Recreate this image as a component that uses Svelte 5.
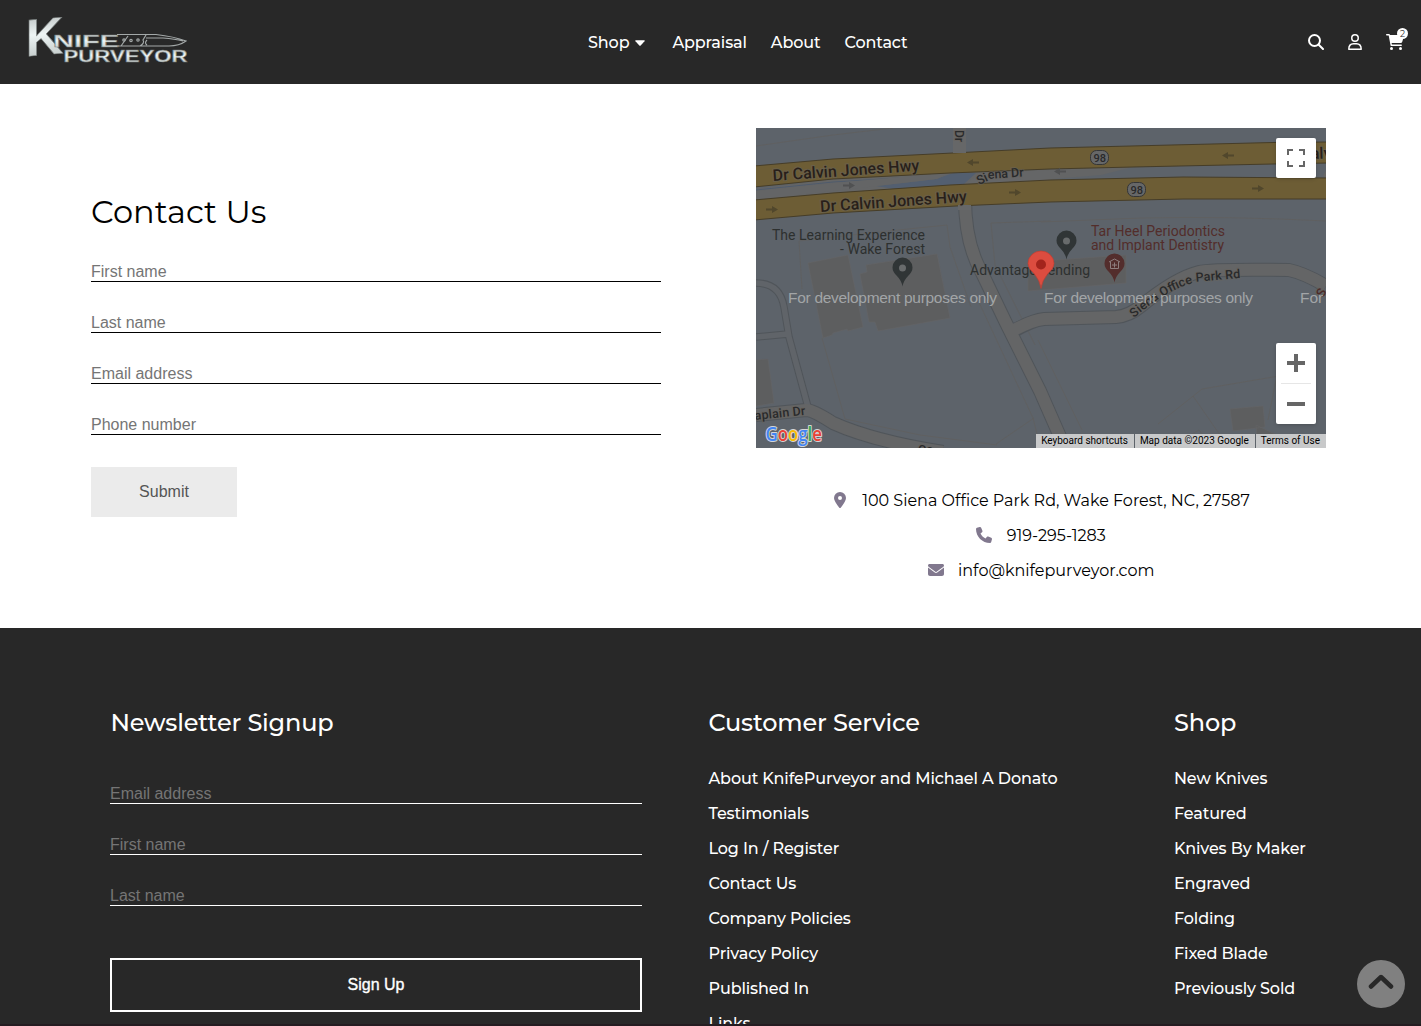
<script>
  const nav = ['Shop', 'Appraisal', 'About', 'Contact'];
  const contactFields = ['First name', 'Last name', 'Email address', 'Phone number'];
  const signupFields = ['Email address', 'First name', 'Last name'];
  const service = [
    'About KnifePurveyor and Michael A Donato',
    'Testimonials',
    'Log In / Register',
    'Contact Us',
    'Company Policies',
    'Privacy Policy',
    'Published In',
    'Links'
  ];
  const shop = [
    'New Knives',
    'Featured',
    'Knives By Maker',
    'Engraved',
    'Folding',
    'Fixed Blade',
    'Previously Sold'
  ];
</script>

<div class="page">
  <header>
    <svg class="logo" width="164" height="54" viewBox="26 13 164 54">
      <defs>
        <linearGradient id="steel" x1="0" y1="0" x2="0" y2="1">
          <stop offset="0" stop-color="#aeb3b3" />
          <stop offset=".45" stop-color="#eef5f5" />
          <stop offset="1" stop-color="#b4bcbb" />
        </linearGradient>
      </defs>
      <g class="mark">
        <text transform="translate(25.500 56.500) skewY(-5) scale(1 1.220)" font-size="43" textLength="38" lengthAdjust="spacingAndGlyphs">K</text>
        <text x="53" y="47" font-size="17" textLength="66" lengthAdjust="spacingAndGlyphs">NIFE</text>
        <text x="63.500" y="61.500" font-size="16" textLength="124" lengthAdjust="spacingAndGlyphs">PURVEYOR</text>
      </g>
      <g fill="none" stroke="#a3a8a8" stroke-width="1.200">
        <path d="M117 34.500h39q18 2 30 6.500q-7 5-17 5h-51M121 46l7-10M140 46q5-3 3-6l3-5M146 38h17q12 1 20 3M147 45q-3-2 0-5" />
        <circle cx="124" cy="40" r="1.200" /><circle cx="131" cy="40.500" r="1.200" /><circle cx="138" cy="40" r="1.200" />
      </g>
    </svg>
    <nav>
      {#each nav as label, i}
        <a href="#top">{label}{#if i === 0}<svg class="caret" width="10" height="6" viewBox="0 0 10 6"><path d="M1 .2h8q1.300 0 .5 1L5.700 5.500q-.7.700-1.400 0L.5 1.200Q-.3.200 1 .2z" fill="#fff" /></svg>{/if}</a>
      {/each}
    </nav>
    <div class="tools">
      <svg width="16" height="16" viewBox="0 0 16 16" fill="none" stroke="#fff" stroke-width="2" stroke-linecap="round"><circle cx="6.500" cy="6.500" r="5.500" /><path d="M10.700 10.700 15 15" /></svg>
      <svg width="14" height="16" viewBox="0 0 14 16" fill="none" stroke="#fff" stroke-width="1.500"><circle cx="7" cy="4" r="3.250" /><path d="M.8 15.200Q.8 9.750 5.500 9.750h3q4.700 0 4.700 5.450z" stroke-linejoin="round" /></svg>
      <span class="cart">
        <svg width="18" height="16" viewBox="0 0 18 16"><path d="M0 .750Q0 0 .750 0H3q.8 0 1 1h13.200q1 0 .750 1l-1.600 5.500Q16 9 14.500 9H5.600l.3 1.500H15.200q.75 0 .75.750t-.75.750H5.300q-.6 0-.75-.600L2.700 1.500H.750Q0 1.500 0 .750z" fill="#fff" /><circle cx="5.500" cy="14.500" r="1.500" fill="#fff" /><circle cx="14.500" cy="14.500" r="1.500" fill="#fff" /></svg>
        <b>2</b>
      </span>
    </div>
  </header>

  <main>
    <form class="contact">
      <h1>Contact Us</h1>
      {#each contactFields as f}<input placeholder={f} />{/each}
      <button type="button">Submit</button>
    </form>

    <section class="visit">
      <div class="map">
        <svg width="570" height="320" viewBox="0 0 570 320">
          <rect width="570" height="320" fill="#5d636a" />
          <g fill="none" stroke="#606060" stroke-width=".9">
            <path d="M0 18 77 7l60-7M46 161l-3-48 70-8 78-8 3 22 21 60M235 95l60-2M235 95l4 42 40 80M66 210l23 81 75 16 77 10M220 168l57 122 5 20M282 212l44 90M402 296l44-35 83-14M437 268l36 52M520 252l-8 40M285 94l100-4q90-2 185 3" />
            <path d="M240 316l38-26M458 320l-15-18-30 18" />
          </g>
          <g fill="#5d5e5f" stroke="#646566" stroke-width=".6">
            <path d="M52 135 92 127 107 199 92 203 91 201 77 205 76 207 67 210z" />
            <path d="M104 146 111 144 110 137 181 126 194 190 122 203 119 194 113 194z" />
            <path d="M0 232 12 231 18 275 0 278zM272 134 370 127v28l-98 8z" />
            <path d="M474 281 507 278 509 299 477 303zM500 297l25 12-3 11h-20z" />
          </g>

          <g fill="none" stroke-linejoin="round">
            <g stroke="#50555a">
              <path d="M0 155q24 0 28 24l5 30 19 70M0 209l32-3" stroke-width="7.500" />
              <path d="M0 287 50 282q7 0 27 13 40 18 110 29" stroke-width="14" />
              <path d="M209 70q0 46 17 75l24 50 34 68 25 57" stroke-width="14" />
              <path d="M256 204q20-12 32-13l72-2q13-1 25-11 34-28 58-34 13-3 90-2 15 3 37 16" stroke-width="14" />
            </g>
            <g stroke="#646566">
              <path d="M0 155q24 0 28 24l5 30 19 70M0 209l32-3" stroke="#606469" stroke-width="5.500" />
              <path d="M0 287 50 282q7 0 27 13 40 18 110 29M209 70q0 46 17 75l24 50 34 68 25 57M254 204q22-12 34-13l72-2q13-1 25-11 34-28 58-34 13-3 90-2 15 3 37 16" stroke-width="12" />
            </g>
          </g>
          <path d="M0 61 77 51 194 45 377 39 345 47 284 52 194 57 77 65 0 72z" fill="#646566" />
          <path d="M0 62 77 54l66-4" fill="none" stroke="#4f5b6c" />
          <path d="M120 58 180 51l17-6h23l-12 11-64 6z" fill="#535f70" />
          <path d="M0 63 77 55l90-8h23l-9 4-60 7-62 7-59 7z" fill="#646566" />
          <path d="M209 57l14-12 71-3v11z" fill="#656667" />
          <path d="M567 48l3-6v8z" fill="#666" />
          <g fill="#6d5d35" stroke="#463d28">
            <path d="M-2 38 77 31 197 25 294 20 517 14.500 572 14V35L517 36 377 39 294 41 194 45 77 51-2 59z" />
            <path d="M-2 72 77 65 194 57 294 52 427 49 572 50V71L427 71 294 74 200 78 77 85-2 92z" />
          </g>
          <path d="M197 0h13v25h-13zM202 77h13v5h-13z" fill="#666768" />
          <g fill="#51472c">
            <path d="M223 33.500h-6V31l-6 3.500 6 3.500v-2.500h6zM10 80.500h6V78l6 3.500-6 3.500v-2.500h-6z" />
            <path d="M253 63.500h6V61l6 3.500-6 3.500v-2.500h-6zM478 26.500h-6V24l-6 3.500 6 3.500v-2.500h6zM496 59.500h6V57l6 3.500-6 3.500v-2.500h-6z" />
          </g>
          <path d="M87 56.500h6V54l6 3.500-6 3.500v-2.500h-6zM310 42.500h-6V40l-6 3.500 6 3.500v-2.500h6z" fill="#505152" />

          <g class="labels" fill="#292a2b">
            <g class="road" fill="#281f1a" font-size="16">
              <text transform="translate(17 53) rotate(-4)" textLength="147">Dr Calvin Jones Hwy</text>
              <text transform="translate(64.500 84) rotate(-4)" textLength="147">Dr Calvin Jones Hwy</text>
              <text transform="translate(555 31) rotate(-2)">alvin</text>
            </g>
            <g class="road" font-size="12.500">
              <text transform="translate(199 2) rotate(90)" font-size="12">Dr</text>
              <text transform="translate(223 57) rotate(-25)">Si</text>
              <text transform="translate(232 51) rotate(-4)" textLength="36">ena Dr</text>
              <text transform="translate(-1 292) rotate(-6)" textLength="51">aplain Dr</text>
              <text x="162" y="326">Ca</text>
              <path id="park" d="M378 190Q412 160 443 153.500L520 147" fill="none" stroke="none" />
              <text><textPath href="#park" textLength="117">Siena Office Park Rd</textPath></text>
              <text transform="translate(567 170) rotate(-60)" fill="#4b2a29">S</text>
            </g>
            <g font-size="14" fill="#2d302f">
              <text x="16" y="112" textLength="153">The Learning Experience</text>
              <text x="84" y="126" textLength="85">- Wake Forest</text>
              <text x="214" y="147" textLength="120">Advantage Lending</text>
              <g fill="#532d2a"><text x="335" y="108" textLength="134">Tar Heel Periodontics</text><text x="335" y="122" textLength="133">and Implant Dentistry</text></g>
            </g>
          </g>
          <g fill="#666768" stroke="#353637" stroke-width="1">
            <rect x="334.500" y="22.500" width="18" height="14" rx="6" /><rect x="371.500" y="54.500" width="18" height="14" rx="6" />
          </g>
          <g class="shield"><text x="337.500" y="33.500">98</text><text x="374.500" y="65.500">98</text></g>

          <path id="pin" d="M146.500 158.500q-1-6-6-11-4-4-4-8a10 10 0 0 1 20 0q0 4-4 8-5 5-6 11z" fill="#303536" />
          <circle cx="146.500" cy="140" r="3.500" fill="#686b6c" />
          <use href="#pin" x="164" y="-27" /><circle cx="310.500" cy="113" r="3.500" fill="#686b6c" />
          <path d="M358.500 154.500q-1-6-6-11-4-4-4-8a10 10 0 0 1 20 0q0 4-4 8-5 5-6 11z" fill="#532d2c" />
          <path d="M353 134l5.500-3 5.500 3M354.500 133.500v7h8v-7M356 137h5M358.500 134.500v5" fill="none" stroke="#8e7e7e" />
          <g class="notice"><text x="32" y="175" textLength="209">For development purposes only</text><text x="288" y="175" textLength="209">For development purposes only</text><text x="544" y="175">For</text></g>
          <path d="M285 160.500q-1-8-7-15-6-5-6-10a13 12.500 0 0 1 26 0q0 5-6 10-6 7-7 15z" fill="#dc4c3f" stroke="#c33d31" stroke-width=".7" />
          <circle cx="285" cy="136.500" r="5" fill="#a3241c" />
          <text class="google" x="9.500" y="312.500" textLength="56.500" lengthAdjust="spacingAndGlyphs"><tspan fill="#4285f4">G</tspan><tspan fill="#e94235">o</tspan><tspan fill="#fabb05">o</tspan><tspan fill="#4285f4">g</tspan><tspan fill="#34a853">l</tspan><tspan fill="#e94235">e</tspan></text>
        </svg>
        <div class="full"><svg width="18" height="18" viewBox="0 0 18 18" fill="none" stroke="#666" stroke-width="2"><path d="M1 6V1h5M12 1h5v5M17 12v5h-5M6 17H1v-5" /></svg></div>
        <div class="zoom">
          <svg width="40" height="81" viewBox="0 0 40 81"><path d="M11 18h7v-7h4v7h7v4h-7v7h-4v-7h-7zM11 59h18v4H11z" fill="#666" /><path d="M5 40h30v1H5z" fill="#e6e6e6" /></svg>
        </div>
        <div class="legal"><span>Keyboard shortcuts</span><span>Map data ©2023 Google</span><span>Terms of Use</span></div>
      </div>
      <ul>
        <li class="place"><svg width="12" height="16" viewBox="0 0 12 16"><path fill-rule="evenodd" d="M6.700 15.700Q12 9 12 6A6 6 0 0 0 0 6q0 3 5.300 9.700.7.700 1.400 0zM6 4a2 2 0 1 1 0 4 2 2 0 0 1 0-4z" /></svg><span>100 Siena Office Park Rd, Wake Forest, NC, 27587</span></li>
        <li><svg width="16" height="16" viewBox="0 0 512 512"><path d="M164.900 24.600c-7.700-18.600-28-28.500-47.400-23.200l-88 24C12.100 30.200 0 46 0 64c0 247.400 200.600 448 448 448 18 0 33.800-12.100 38.600-29.500l24-88c5.300-19.400-4.600-39.700-23.200-47.400l-96-40c-16.300-6.800-35.200-2.100-46.300 11.600L304.700 368C234.300 334.700 177.300 277.700 144 207.300l49.300-40.400c13.700-11.200 18.400-30 11.600-46.300l-40-96z" /></svg><span>919-295-1283</span></li>
        <li><svg width="16" height="16" viewBox="0 0 512 512"><path d="M48 64C21.500 64 0 85.500 0 112c0 15.100 7.100 29.300 19.200 38.400L236.800 313.600c11.400 8.500 27 8.500 38.400 0l217.600-163.200c12.100-9.100 19.200-23.300 19.200-38.400 0-26.500-21.500-48-48-48H48zM0 176v208c0 35.300 28.700 64 64 64h384c35.300 0 64-28.700 64-64V176L294.400 339.200c-22.800 17.100-54 17.100-76.800 0L0 176z" /></svg><span>info@knifepurveyor.com</span></li>
      </ul>
    </section>
  </main>

  <footer>
    <form class="signup">
      <h2>Newsletter Signup</h2>
      {#each signupFields as f}<input placeholder={f} />{/each}
      <button type="button">Sign Up</button>
    </form>
    <div>
      <h2>Customer Service</h2>
      {#each service as label}<a href="#top">{label}</a>{/each}
    </div>
    <div>
      <h2>Shop</h2>
      {#each shop as label}<a href="#top">{label}</a>{/each}
    </div>
  </footer>
  <div class="strip"></div>
  <div class="up"><svg width="26" height="18" viewBox="0 0 26 18"><path d="M3 13.500 13 4l10 9.500" fill="none" stroke="#282828" stroke-width="4.500" stroke-linecap="round" stroke-linejoin="round" /></svg></div>
</div>

<style>
  :global(body) { margin: 0; overflow: hidden; }
  .page { position: relative; display: flex; flex-direction: column; height: 1026px; overflow: hidden; background: #fff; color: #000; font: 400 16px/35px Montserrat, Inter, sans-serif; white-space: nowrap; }
  a { color: #fff; text-decoration: none; display: block; font-weight: 500; letter-spacing: -.12px; }
  h1, h2 { margin: 0; font-weight: 400; }
  header { flex: none; height: 84px; box-sizing: border-box; background: #282828; display: grid; grid-template-columns: 588px 1fr auto; align-items: center; padding-right: 17px; }
  .logo { margin-left: 26px; margin-top: -4px; overflow: visible; }
  .mark { font-family: "Liberation Sans", sans-serif; font-weight: 700; fill: url(#steel); stroke: #777d7c; stroke-width: .5; }
  nav { display: flex; gap: 24px; }
  nav a { display: flex; align-items: center; gap: 6px; }
  nav a:first-child { margin-right: 3px; }
  .caret { margin-top: 1px; }
  .tools { display: flex; gap: 24px; align-items: center; }
  .tools svg { display: block; }
  .cart { position: relative; }
  .cart b { position: absolute; left: 11px; top: -6px; width: 11px; height: 11px; border-radius: 50%; background: #fff; color: #333; font: 400 9px/11px Montserrat, sans-serif; text-align: center; }
  main { flex: none; height: 544px; display: flex; gap: 95px; padding: 44px 95px 0 91px; box-sizing: border-box; }
  form { display: flex; flex-direction: column; align-items: flex-start; }
  .contact { width: 570px; padding-top: 62px; }
  h1 { font-size: 32px; line-height: 44px; margin-bottom: 27px; }
  input { width: 100%; height: 21px; box-sizing: border-box; margin: 0 0 30px; padding: 2px 0 0; border: 0; border-bottom: 1px solid #000; border-radius: 0; background: none; outline: 0; font: 16px/18px "Liberation Sans", sans-serif; }
  input::placeholder { color: #757575; opacity: 1; }
  button { font: 16px "Liberation Sans", sans-serif; padding: 0; }
  .contact button { width: 146px; height: 50px; margin-top: 2px; border: 0; background: #ebebeb; color: #555; }
  .visit { width: 570px; }
  .map { position: relative; height: 320px; overflow: hidden; }
  .map svg { display: block; }
  .labels { font-family: Roboto, sans-serif; }
  .road { font-weight: 500; paint-order: stroke; stroke: #68635b; stroke-width: 2px; stroke-opacity: .55; }
  .shield { font: 500 11px Roboto, sans-serif; fill: #29292a; }
  .notice { font: 15.500px "Liberation Sans", sans-serif; fill: #a2a5a7; }
  .google { font: 600 19px "Open Sans", sans-serif; paint-order: stroke; stroke: #d4d5d6; stroke-width: 2px; stroke-linejoin: round; }
  .full { position: absolute; right: 10px; top: 10px; width: 40px; height: 40px; background: #fff; border-radius: 2px; display: grid; place-items: center; box-shadow: 0 1px 4px -1px rgba(0,0,0,.3); }
  .zoom { position: absolute; right: 10px; top: 215px; width: 40px; height: 81px; background: #fff; border-radius: 2px; box-shadow: 0 1px 4px -1px rgba(0,0,0,.3); }
  .legal { position: absolute; right: 0; bottom: 0; height: 14px; display: flex; font: 10px/14px Roboto, sans-serif; }
  .legal span { background: #c8c9ca; padding: 0 6px 0 5px; border-left: 1px solid #5d636a; }
  .legal span:first-child { border: 0; }
  ul { list-style: none; margin: 0; padding: 35px 0 0; }
  li { display: flex; justify-content: center; align-items: center; height: 35px; gap: 14.500px; }
  li svg { fill: #81788e; margin-top: -1px; }
  .place { gap: 16px; padding-left: 2px; }
  footer { flex: 1; min-height: 0; overflow: hidden; background: #282828; color: #fff; display: grid; grid-template-columns: 532px 399px 1fr; column-gap: 66.500px; padding: 77px 0 0 110px; }
  h2 { font-size: 24px; line-height: 36px; margin-bottom: 20px; font-weight: 500; letter-spacing: -.18px; }
  .signup h2 { margin-bottom: 42px; padding-left: .5px; }
  .signup input { border-color: #fff; color: #fff; }
  .signup button { width: 532px; height: 54px; margin-top: 22px; border: 2px solid #fff; background: none; color: #fff; -webkit-text-stroke: .35px #fff; }
  .strip { position: absolute; left: 0; right: 0; bottom: 0; height: 2px; background: #241c21; }
  .up { position: absolute; left: 1357px; top: 960px; width: 48px; height: 48px; border-radius: 50%; background: #808080; display: grid; place-items: center; }
  .up svg { margin-top: -4px; }
</style>
